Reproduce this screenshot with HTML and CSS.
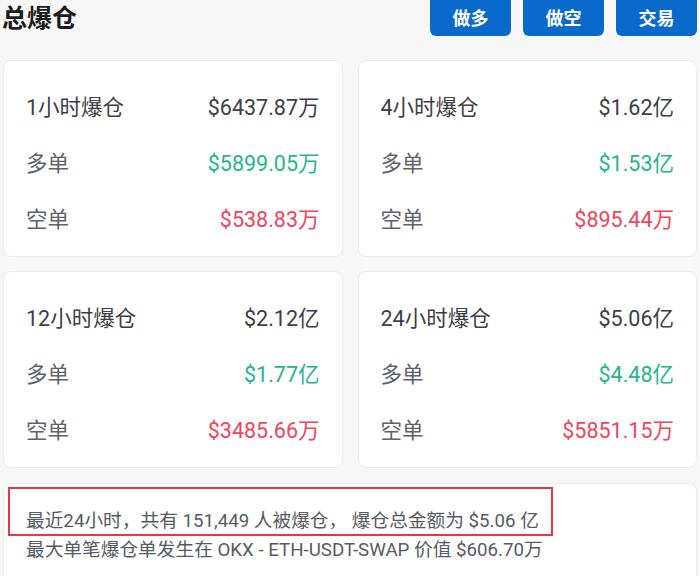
FILE: index.html
```html
<!DOCTYPE html>
<html lang="zh">
<head>
    <meta charset="UTF-8">
    <meta name="viewport" content="width=device-width, initial-scale=1.0">
    <title>总爆仓</title>
    <link rel="stylesheet" href="styles.css">
</head>
<body>
    <div class="page">
        <div class="header">
            <h1>总爆仓</h1>
            <div class="btn-group">
                <button class="btn">做多</button>
                <button class="btn">做空</button>
                <button class="btn">交易</button>
            </div>
        </div>

        <div class="grid">
            <div class="card">
                <div class="row"><span class="label main">1小时爆仓</span><span class="value">$6437.87万</span></div>
                <div class="row"><span class="label">多单</span><span class="value long">$5899.05万</span></div>
                <div class="row"><span class="label">空单</span><span class="value short">$538.83万</span></div>
            </div>
            <div class="card">
                <div class="row"><span class="label main">4小时爆仓</span><span class="value">$1.62亿</span></div>
                <div class="row"><span class="label">多单</span><span class="value long">$1.53亿</span></div>
                <div class="row"><span class="label">空单</span><span class="value short">$895.44万</span></div>
            </div>
            <div class="card">
                <div class="row"><span class="label main">12小时爆仓</span><span class="value">$2.12亿</span></div>
                <div class="row"><span class="label">多单</span><span class="value long">$1.77亿</span></div>
                <div class="row"><span class="label">空单</span><span class="value short">$3485.66万</span></div>
            </div>
            <div class="card">
                <div class="row"><span class="label main">24小时爆仓</span><span class="value">$5.06亿</span></div>
                <div class="row"><span class="label">多单</span><span class="value long">$4.48亿</span></div>
                <div class="row"><span class="label">空单</span><span class="value short">$5851.15万</span></div>
            </div>
        </div>

        <div class="summary">
            <div class="highlight"></div>
            <p>最近24小时，共有 151,449 人被爆仓， 爆仓总金额为 $5.06 亿</p>
            <p>最大单笔爆仓单发生在 OKX - ETH-USDT-SWAP 价值 $606.70万</p>
        </div>
    </div>
</body>
</html>
```

FILE: styles.css
```css
body {
    font-family: Roboto, "Noto Sans CJK SC", sans-serif;
    background-color: #f7f7f7;
    margin: 0;
    padding: 0;
    overflow: hidden;
}
.page {
    padding: 0 3px;
}
.header {
    display: flex;
    justify-content: space-between;
    align-items: center;
    height: 44px;
    margin-top: -8px;
}
h1 {
    margin: 0 0 0 -1px;
    font-size: 25px;
    font-weight: 700;
    color: #1b1b1b;
    padding-top: 4px;
}
.btn-group {
    display: flex;
    gap: 12px;
    align-self: flex-start;
}
.btn {
    width: 81px;
    height: 44px;
    padding-top: 6px;
    background-color: #0a6acb;
    color: white;
    font-family: "Noto Sans CJK SC", sans-serif;
    font-size: 18px;
    font-weight: 700;
    border: none;
    border-radius: 6px;
}
.grid {
    display: grid;
    grid-template-columns: 1fr 1fr;
    column-gap: 15px;
    row-gap: 14px;
    margin-top: 24px;
}
.card {
    background-color: white;
    border: 1px solid #ececec;
    border-radius: 8px;
    padding: 16px 22px 11px;
}
.row {
    display: flex;
    justify-content: space-between;
    align-items: center;
    height: 56px;
    font-size: 21.5px;
}
.label {
    color: #5d636b;
}
.label.main,
.value {
    color: #3c4046;
}
.value.long {
    color: #27b58b;
}
.value.short {
    color: #f2455a;
}
.summary {
    position: relative;
    background-color: white;
    border: 1px solid #ececec;
    border-radius: 8px;
    margin-top: 15px;
    padding: 23px 22px 20px;
    height: 120px;
}
.summary p {
    margin: 0;
    font-size: 18.7px;
    line-height: 29px;
    color: #565b62;
}
.highlight {
    position: absolute;
    top: 3px;
    left: 4px;
    width: 541px;
    height: 45px;
    border: 2px solid #e8383d;
}
```
